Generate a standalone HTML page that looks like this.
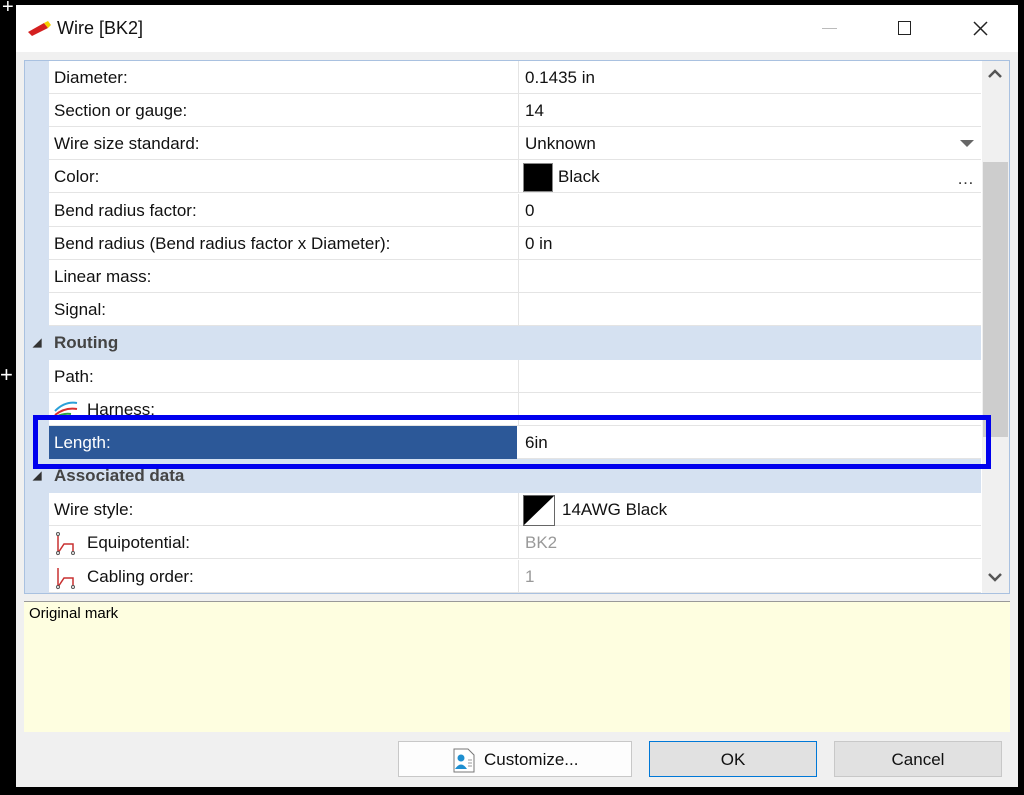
<!DOCTYPE html><html><head><style>
*{margin:0;padding:0;box-sizing:border-box}
body{width:1024px;height:795px;background:#000;position:relative;overflow:hidden;font-family:"Liberation Sans",sans-serif;color:#111}
.a{position:absolute}
.win{left:16px;top:5px;width:1002px;height:782px;background:#f0f0f0}
.title{left:16px;top:5px;width:1002px;height:47px;background:#fff}
.grid{left:24px;top:60px;width:986px;height:534px;background:#fff;border:1px solid #a9c1e0}
.gut{left:25px;top:61px;width:24px;height:532px;background:#d5e1f1}
.row{position:absolute;left:49px;width:932px;height:33px;border-bottom:1px solid #e4e4e4;font-size:17px;line-height:33px}
.row .l{position:absolute;left:5px;top:0}
.row .v{position:absolute;left:476px;top:0}
.row .d{position:absolute;left:469px;top:0;width:1px;height:33px;background:#e4e4e4}
.hdr{position:absolute;left:25px;width:956px;height:34px;background:#d5e1f1;font-size:17px;font-weight:bold;color:#444;line-height:34px}
.btn{position:absolute;top:741px;height:36px;font-size:17px;text-align:center;line-height:36px;border:1px solid #c8c8c8}
</style></head><body>
<div class="a" style="left:0;top:0;width:5px;height:795px"></div>
<div class="a" style="left:2px;top:0;color:#fff;font-size:20px;line-height:14px">+</div>
<div class="a" style="left:0;top:362px;color:#fff;font-size:22px">+</div>
<div class="a win"></div>
<div class="a title"></div>
<svg class="a" style="left:26px;top:20px" width="26" height="16"><path d="M2 12 L18 3 L22 8 L6 16 Z" fill="#d42020"/><path d="M18 3 L22 1 L25 5 L22 8 Z" fill="#f5d000"/></svg>
<div class="a" style="left:57px;top:18px;font-size:18px;color:#111">Wire [BK2]</div>
<div class="a" style="left:822px;top:28px;width:15px;height:1px;background:#bbb"></div>
<div class="a" style="left:898px;top:21px;width:13px;height:14px;border:1.5px solid #222"></div>
<svg class="a" style="left:973px;top:21px" width="15" height="15"><path d="M1 1L14 14M14 1L1 14" stroke="#222" stroke-width="1.5"/></svg>
<div class="a grid"></div>
<div class="a gut"></div>
<div class="row" style="top:61px"><span class="l">Diameter:</span><span class="d"></span><span class="v">0.1435 in</span></div>
<div class="row" style="top:94px"><span class="l">Section or gauge:</span><span class="d"></span><span class="v">14</span></div>
<div class="row" style="top:127px"><span class="l">Wire size standard:</span><span class="d"></span><span class="v">Unknown</span><svg class="a" style="left:911px;top:13px" width="14" height="8"><path d="M0 0H14L7 7Z" fill="#666"/></svg></div>
<div class="row" style="top:160px"><span class="l">Color:</span><span class="d"></span><span class="a" style="left:474px;top:3px;width:30px;height:29px;background:#000;border:1px solid #888"></span><span class="v" style="left:509px">Black</span><span class="a" style="left:908px;top:2px;color:#333">…</span></div>
<div class="row" style="top:194px"><span class="l">Bend radius factor:</span><span class="d"></span><span class="v">0</span></div>
<div class="row" style="top:227px"><span class="l">Bend radius (Bend radius factor x Diameter):</span><span class="d"></span><span class="v">0 in</span></div>
<div class="row" style="top:260px"><span class="l">Linear mass:</span><span class="d"></span></div>
<div class="row" style="top:293px"><span class="l">Signal:</span><span class="d"></span></div>
<div class="hdr" style="top:326px"><span style="position:absolute;left:8px;font-size:11px;color:#333">◢</span><span style="position:absolute;left:29px">Routing</span></div>
<div class="row" style="top:360px"><span class="l">Path:</span><span class="d"></span></div>
<div class="row" style="top:393px"><svg class="a" style="left:4px;top:4px" width="26" height="26"><path d="M2 14 Q12 4 24 6" stroke="#2aa0d8" stroke-width="2" fill="none"/><path d="M2 18 Q12 10 24 12" stroke="#d83030" stroke-width="2" fill="none"/><path d="M3 20 Q10 16 18 17" stroke="#30a040" stroke-width="2" fill="none"/></svg><span class="l" style="left:38px">Harness:</span><span class="d"></span></div>
<div class="row" style="top:426px;background:#fff"><span class="a" style="left:0;top:0;width:468px;height:33px;background:#2c5898"></span><span class="l" style="color:#fff">Length:</span><span class="v">6in</span></div>
<div class="hdr" style="top:459px"><span style="position:absolute;left:8px;font-size:11px;color:#333">◢</span><span style="position:absolute;left:29px">Associated data</span></div>
<div class="row" style="top:493px"><span class="l">Wire style:</span><span class="d"></span><svg class="a" style="left:474px;top:2px" width="32" height="31"><rect x="0.5" y="0.5" width="31" height="30" fill="#fff" stroke="#666"/><path d="M1 30L31 1V30Z" fill="#fff"/><path d="M1 1H31L1 30Z" fill="#000"/></svg><span class="v" style="left:513px">14AWG Black</span></div>
<div class="row" style="top:526px"><svg class="a" style="left:5px;top:6px" width="24" height="24"><path d="M4 2V21L10 12H19V21" stroke="#c83030" stroke-width="1.5" fill="none"/><circle cx="4" cy="2" r="1.5" fill="#fff" stroke="#555"/><circle cx="4" cy="21" r="1.5" fill="#fff" stroke="#555"/><circle cx="19" cy="21" r="1.5" fill="#fff" stroke="#555"/></svg><span class="l" style="left:38px">Equipotential:</span><span class="d"></span><span class="v" style="color:#999">BK2</span></div>
<div class="row" style="top:560px"><svg class="a" style="left:5px;top:6px" width="24" height="24"><path d="M4 2V21L10 12H19V21" stroke="#c83030" stroke-width="1.5" fill="none"/><circle cx="4" cy="21" r="1.5" fill="#fff" stroke="#555"/><circle cx="19" cy="21" r="1.5" fill="#fff" stroke="#555"/></svg><span class="l" style="left:38px">Cabling order:</span><span class="d"></span><span class="v" style="color:#999">1</span></div>
<div class="a" style="left:982px;top:61px;width:27px;height:532px;background:#f0f0f0"></div>
<div class="a" style="left:983px;top:162px;width:25px;height:275px;background:#cdcdcd"></div>
<svg class="a" style="left:988px;top:69px" width="14" height="10"><path d="M1 8L7 2L13 8" stroke="#555" stroke-width="2.5" fill="none"/></svg>
<svg class="a" style="left:988px;top:572px" width="14" height="10"><path d="M1 2L7 8L13 2" stroke="#555" stroke-width="2.5" fill="none"/></svg>
<div class="a" style="left:33px;top:415px;width:958px;height:54px;border:5px solid #0000ee"></div>
<div class="a" style="left:24px;top:601px;width:986px;height:131px;background:#fefee0;border-top:1px solid #999"></div>
<div class="a" style="left:29px;top:605px;font-size:15px;color:#000">Original mark</div>
<div class="btn" style="left:398px;width:234px;background:#fdfdfd"><svg style="position:absolute;left:54px;top:6px" width="22" height="25"><path d="M1 1H15L21 7V24H1Z" fill="#fff" stroke="#777"/><circle cx="8" cy="10" r="3.5" fill="#1e8fd0"/><path d="M2 21Q8 12 14 21Z" fill="#1e8fd0"/><path d="M15 12H19M15 15H19M15 18H19" stroke="#999"/></svg><span style="position:absolute;left:85px">Customize...</span></div>
<div class="btn" style="left:649px;width:168px;background:#e1e1e1;border:1px solid #0078d7">OK</div>
<div class="btn" style="left:834px;width:168px;background:#e1e1e1">Cancel</div>
</body></html>
